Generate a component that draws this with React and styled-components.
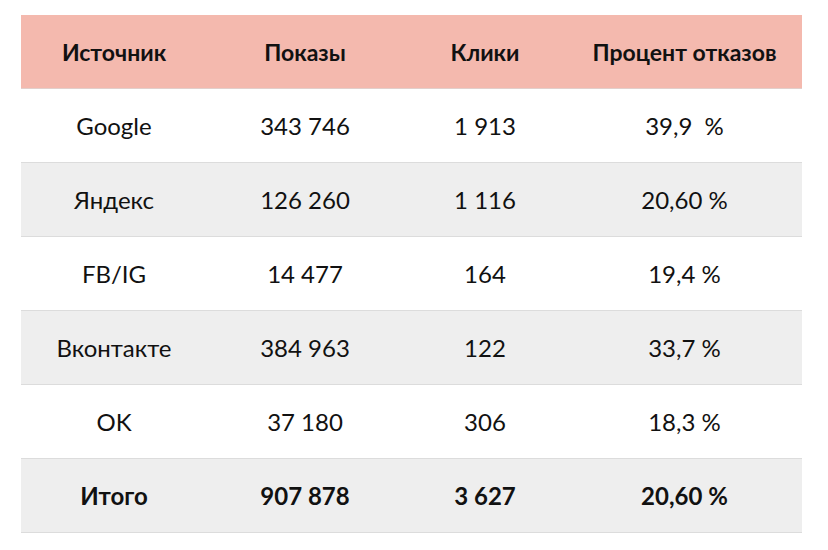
import React from 'react';
import styled, { createGlobalStyle } from 'styled-components';

const GlobalStyle = createGlobalStyle`
  body {
    margin: 0;
    background: #ffffff;
    font-family: Lato, "Noto Sans", sans-serif;
    color: #111111;
  }
`;

const Page = styled.div`
  padding: 15px 26px 0 21px;
`;

const Table = styled.div`
  display: grid;
  grid-template-columns: 186px 196px 164px 1fr;
  width: 781px;
`;

const Row = styled.div`
  display: contents;
`;

const Cell = styled.div`
  height: 73px;
  display: flex;
  align-items: center;
  justify-content: center;
  font-size: 24px;
  font-weight: ${(p) => (p.$bold ? 700 : 400)};
  background: ${(p) => p.$bg};
  border-bottom: 1px solid #dcdcdc;
  white-space: pre;
`;

const HeadCell = styled(Cell)`
  font-size: 23px;
  font-weight: 700;
  background: #f4b9ae;
  border-bottom-color: #e2cfcb;
`;

const columns = ['Источник', 'Показы', 'Клики', 'Процент отказов'];

const rows = [
  ['Google', '343 746', '1 913', '39,9  %'],
  ['Яндекс', '126 260', '1 116', '20,60 %'],
  ['FB/IG', '14 477', '164', '19,4 %'],
  ['Вконтакте', '384 963', '122', '33,7 %'],
  ['OK', '37 180', '306', '18,3 %'],
];

const total = ['Итого', '907 878', '3 627', '20,60 %'];

function App() {
  return (
    <Page>
      <GlobalStyle />
      <Table>
        <Row>
          {columns.map((c) => (
            <HeadCell key={c}>{c}</HeadCell>
          ))}
        </Row>
        {rows.map((r, i) => (
          <Row key={r[0]}>
            {r.map((v, j) => (
              <Cell key={j} $bg={i % 2 ? '#eeeeee' : '#ffffff'}>
                {v}
              </Cell>
            ))}
          </Row>
        ))}
        <Row>
          {total.map((v, j) => (
            <Cell key={j} $bold $bg="#eeeeee">
              {v}
            </Cell>
          ))}
        </Row>
      </Table>
    </Page>
  );
}

export default App;
